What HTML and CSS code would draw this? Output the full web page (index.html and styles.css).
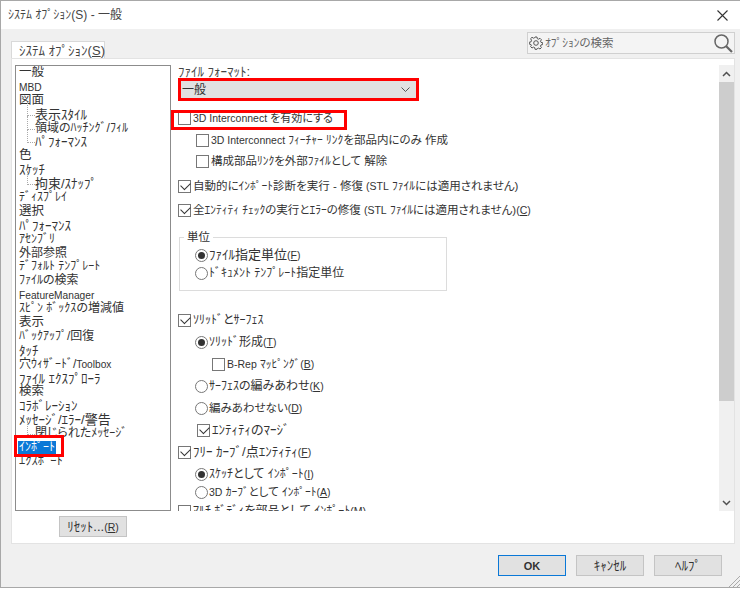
FILE: index.html
```html
<!DOCTYPE html>
<html lang="ja">
<head>
<meta charset="utf-8">
<title>ｼｽﾃﾑ ｵﾌﾟｼｮﾝ(S) - 一般</title>
<link rel="stylesheet" href="styles.css">
</head>
<body>
<div class="window">
  <header class="titlebar">
    <span class="title">ｼｽﾃﾑ ｵﾌﾟｼｮﾝ(S) - 一般</span>
    <svg class="close" width="11" height="11" viewBox="0 0 11 11"><path d="M.5.500l10 10M10.500.500l-10 10" stroke="#333" stroke-width="1.100" fill="none"/></svg>
  </header>
  <div class="tabstrip">
    <div class="tab">ｼｽﾃﾑ ｵﾌﾟｼｮﾝ(<u>S</u>)</div>
    <div class="search">
      <svg class="gear" width="14" height="14" viewBox="0 0 14 14"><path d="M6 1h2l.3 1.700 1.200.5L11 2.300l1.400 1.400-.9 1.500.5 1.200 1.700.3v1.900l-1.700.3-.5 1.200.9 1.500-1.400 1.400-1.500-.9-1.200.5L8 13.300H6l-.3-1.700-1.200-.5-1.500.9-1.400-1.400.9-1.500L2 8.500l-1.700-.4V6.200L2 5.900l.5-1.700-.9-1.500L3 1.300l1.500.9 1.200-.5z" fill="none" stroke="#555" stroke-width="1"/><circle cx="7" cy="7" r="2.300" fill="none" stroke="#555" stroke-width="1"/></svg>
      <span class="search-text">ｵﾌﾟｼｮﾝの検索</span>
      <svg class="lens" width="20" height="20" viewBox="0 0 20 20"><circle cx="8.500" cy="8.500" r="6.500" fill="none" stroke="#666" stroke-width="1.500"/><path d="M13 13l6 6" stroke="#666" stroke-width="2.200" fill="none"/></svg>
    </div>
  </div>
  <section class="panel">
    <div class="top">
      <div class="side">
        <ul class="tree">
          <li class="w">一般</li>
          <li><span class="l">MBD</span></li>
          <li class="w">図面</li>
          <li class="sub">表示ｽﾀｲﾙ</li>
          <li class="sub n">領域のﾊｯﾁﾝｸﾞ/ﾌｨﾙ</li>
          <li class="sub">ﾊﾟﾌｫｰﾏﾝｽ</li>
          <li class="w">色</li>
          <li>ｽｹｯﾁ</li>
          <li class="sub">拘束/ｽﾅｯﾌﾟ</li>
          <li class="n">ﾃﾞｨｽﾌﾟﾚｲ</li>
          <li class="w">選択</li>
          <li>ﾊﾟﾌｫｰﾏﾝｽ</li>
          <li class="n">ｱｾﾝﾌﾞﾘ</li>
          <li class="n">外部参照</li>
          <li class="n">ﾃﾞﾌｫﾙﾄ ﾃﾝﾌﾟﾚｰﾄ</li>
          <li class="n">ﾌｧｲﾙの検索</li>
          <li><span class="l">FeatureManager</span></li>
          <li class="n">ｽﾋﾟﾝ ﾎﾞｯｸｽの増減値</li>
          <li class="w">表示</li>
          <li class="n">ﾊﾞｯｸｱｯﾌﾟ/回復</li>
          <li>ﾀｯﾁ</li>
          <li class="n">穴ｳｨｻﾞｰﾄﾞ/<span class="l">Toolbox</span></li>
          <li>ﾌｧｲﾙ ｴｸｽﾌﾟﾛｰﾗ</li>
          <li class="w">検索</li>
          <li>ｺﾗﾎﾞﾚｰｼｮﾝ</li>
          <li>ﾒｯｾｰｼﾞ/ｴﾗｰ/警告</li>
          <li class="sub n">閉じられたﾒｯｾｰｼﾞ</li>
          <li class="selected n"><span>ｲﾝﾎﾟｰﾄ</span></li>
          <li class="w">ｴｸｽﾎﾟｰﾄ</li>
        </ul>
      </div>
      <div class="content">
        <div class="options">
          <div class="label-format">ﾌｧｲﾙ ﾌｫｰﾏｯﾄ:</div>
          <div class="select"><span>一般</span><svg width="9" height="5" viewBox="0 0 9 5"><path d="M.5.500l4 4 4-4" fill="none" stroke="#555"/></svg></div>
          <div class="row fs11 r-inter"><i class="cb"></i><span class="txt"><span class="l">3D Interconnect</span> を有効にする</span></div>
          <div class="row fs115 lv1 r-a"><i class="cb"></i><span class="txt"><span class="l">3D Interconnect</span> ﾌｨｰﾁｬｰ ﾘﾝｸを部品内にのみ 作成</span></div>
          <div class="row fs115 lv1 r-b"><i class="cb"></i><span class="txt">構成部品ﾘﾝｸを外部ﾌｧｲﾙとして 解除</span></div>
          <div class="row fs115 r-c"><i class="cb on"></i><span class="txt">自動的にｲﾝﾎﾟｰﾄ診断を実行 - 修復 <span class="l">(STL</span> ﾌｧｲﾙには適用されません)</span></div>
          <div class="row fs115 r-d"><i class="cb on"></i><span class="txt">全ｴﾝﾃｨﾃｨ ﾁｪｯｸの実行とｴﾗｰの修復 <span class="l">(STL</span> ﾌｧｲﾙには適用されません)<span class="l">(<u>C</u>)</span></span></div>
          <fieldset class="units">
            <legend>単位</legend>
            <div class="row r-file"><i class="rb on"></i><span class="txt">ﾌｧｲﾙ指定単位<span class="l">(<u>F</u>)</span></span></div>
            <div class="row fs12 r-doc"><i class="rb"></i><span class="txt">ﾄﾞｷｭﾒﾝﾄ ﾃﾝﾌﾟﾚｰﾄ指定単位</span></div>
          </fieldset>
          <div class="row fs12 r-solid"><i class="cb on"></i><span class="txt">ｿﾘｯﾄﾞとｻｰﾌｪｽ</span></div>
          <div class="row fs12 lv2 r-n"><i class="rb on"></i><span class="txt">ｿﾘｯﾄﾞ形成<span class="l">(<u>T</u>)</span></span></div>
          <div class="row fs115 lv3 r-n"><i class="cb"></i><span class="txt"><span class="l">B-Rep</span> ﾏｯﾋﾟﾝｸﾞ<span class="l">(<u>B</u>)</span></span></div>
          <div class="row fs12 lv2 r-n"><i class="rb"></i><span class="txt">ｻｰﾌｪｽの編みあわせ<span class="l">(<u>K</u>)</span></span></div>
          <div class="row fs115 lv2 r-n"><i class="rb"></i><span class="txt">編みあわせない<span class="l">(<u>D</u>)</span></span></div>
          <div class="row lv4 r-n"><i class="cb on"></i><span class="txt">ｴﾝﾃｨﾃｨのﾏｰｼﾞ</span></div>
          <div class="row r-n"><i class="cb on"></i><span class="txt">ﾌﾘｰ ｶｰﾌﾞ/点ｴﾝﾃｨﾃｨ<span class="l">(<u>F</u>)</span></span></div>
          <div class="row fs12 lv2 r-n"><i class="rb on"></i><span class="txt">ｽｹｯﾁとして ｲﾝﾎﾟｰﾄ<span class="l">(<u>I</u>)</span></span></div>
          <div class="row fs115 lv2 r-last"><i class="rb"></i><span class="txt"><span class="l">3D</span> ｶｰﾌﾞとして ｲﾝﾎﾟｰﾄ<span class="l">(<u>A</u>)</span></span></div>
          <div class="row fs12 r-last2"><i class="cb"></i><span class="txt">ﾏﾙﾁ ﾎﾞﾃﾞｨを部品として ｲﾝﾎﾟｰﾄ<span class="l">(<u>M</u>)</span></span></div>
        </div>
        <div class="scrollbar">
          <svg width="9" height="6" viewBox="0 0 9 6"><path d="M1 5l3.500-3.500L8 5" fill="none" stroke="#505050" stroke-width="1.500"/></svg>
          <div class="track"><div class="thumb"></div></div>
          <svg width="9" height="6" viewBox="0 0 9 6"><path d="M1 1l3.500 3.500L8 1" fill="none" stroke="#505050" stroke-width="1.500"/></svg>
        </div>
      </div>
    </div>
    <div class="reset-row"><button class="btn">ﾘｾｯﾄ...<span class="l">(<u>R</u>)</span></button></div>
  </section>
  <footer class="footer">
    <button class="btn ok">OK</button>
    <button class="btn">ｷｬﾝｾﾙ</button>
    <button class="btn">ﾍﾙﾌﾟ</button>
  </footer>
  <svg class="grip" width="12" height="12" viewBox="0 0 12 12"><path d="M12 1L1 12M12 5l-7 7M12 9l-3 3" stroke="#aaa" fill="none"/></svg>
  <div class="hl hl-select"></div>
  <div class="hl hl-inter"></div>
  <div class="hl hl-import"></div>
</div>
</body>
</html>
```

FILE: styles.css
```css
* { box-sizing: border-box; }
html, body { margin: 0; padding: 0; }
body { width: 740px; height: 589px; overflow: hidden; background: #fff; }
.window {
  position: relative;
  width: 740px;
  height: 588px;
  border: 1px solid #a8a8a8;
  border-right: 0;
  background: #f0f0f0;
  font-family: "Liberation Sans", "Noto Sans CJK JP", sans-serif;
  font-feature-settings: "palt";
  font-size: 13px;
  line-height: 14px;
  color: #333;
  display: flex;
  flex-direction: column;
}
.l { font-size: 10.500px; }
.titlebar {
  height: 28px;
  background: #fff;
  display: flex;
  align-items: center;
  justify-content: space-between;
  padding: 0 12px 0 7px;
  flex: none;
}
.title { color: #444; font-size: 12px; }
.tabstrip {
  height: 29px;
  flex: none;
  display: flex;
  justify-content: space-between;
  align-items: flex-start;
  padding: 3px 5px 0 10px;
}
.tab {
  margin-top: 9px;
  width: 94px;
  height: 18px;
  background: #fff;
  border: 1px solid #d9d9d9;
  border-bottom: 0;
  padding: 2px 0 0 7px;
  color: #444;
  white-space: nowrap;
}
.search {
  width: 208px;
  height: 22px;
  border: 1px solid #d0d0d0;
  background: #f4f4f4;
  display: flex;
  align-items: center;
  padding: 0 1px;
  color: #666;
  font-size: 11.500px;
}
.gear { flex: none; margin-right: 2px; }
.search-text { flex: 1; }
.panel {
  margin: 0 5px 0 10px;
  height: 486px;
  background: #fff;
  border: 1px solid #e3e3e3;
  flex: none;
  padding: 6px 0 0 3px;
  display: flex;
  flex-direction: column;
}
.top { display: flex; height: 446px; flex: none; }
.side { width: 156px; flex: none; }
.tree {
  list-style: none;
  margin: 0;
  padding: 0 0 0 3px;
  height: 446px;
  border: 1px solid #8c8c8c;
  overflow: hidden;
}
.tree li {
  height: 13.900px;
  line-height: 13.900px;
  white-space: nowrap;
}
.tree li.n { font-size: 12px; }
.tree li.w { font-size: 12.500px; }
.tree .l { font-size: 10.200px; }
.tree li.sub {
  position: relative;
  margin-left: 16px;
}
.tree li.sub::before {
  content: "";
  position: absolute;
  left: -8px;
  top: -6px;
  width: 7px;
  height: 13px;
  border-left: 1px dotted #aaa;
  border-bottom: 1px dotted #aaa;
}
.tree li.selected span {
  display: inline-block;
  margin-left: -1px;
  padding: 0 1px;
  background: #0a78d7;
  color: #fff;
}
.content { flex: 1; display: flex; min-width: 0; padding-left: 7px; }
.options { flex: 1; height: 446px; overflow: hidden; min-width: 0; }
.label-format { height: 14px; color: #444; }
.select {
  margin: 2px 0 0 3px;
  width: 235px;
  height: 17px;
  background: #e1e1e1;
  display: flex;
  align-items: center;
  justify-content: space-between;
  padding: 0 6px 0 1px;
  font-size: 12px;
}
.row {
  display: flex;
  align-items: center;
  height: 14px;
  white-space: nowrap;
}
.fs11 { font-size: 11px; }
.fs115 { font-size: 11.500px; }
.fs12 { font-size: 12px; }
.txt { margin-left: 2px; }
.cb, .rb {
  display: block;
  flex: none;
  width: 13px;
  height: 13px;
  background: #fff;
  border: 1px solid #777;
  position: relative;
}
.rb { border-radius: 50%; }
.cb.on::after {
  content: "";
  position: absolute;
  left: 2px;
  top: 1px;
  width: 8px;
  height: 5px;
  border-left: 1.400px solid #333;
  border-bottom: 1.400px solid #333;
  transform: rotate(-45deg);
}
.rb.on::after {
  content: "";
  position: absolute;
  left: 2px;
  top: 2px;
  width: 7px;
  height: 7px;
  border-radius: 50%;
  background: #333;
}
.r-inter { margin-top: 13px; }
.lv1 { padding-left: 18px; }
.r-a { margin-top: 8px; }
.r-b { margin-top: 7px; }
.r-c { margin-top: 11px; }
.r-d { margin-top: 10px; }
.units {
  margin: 14px 0 0 1px;
  padding: 0 0 0 15px;
  width: 268px;
  height: 60px;
  border: 1px solid #dcdcdc;
  min-inline-size: 0;
}
.units legend { padding: 0 3px; margin-left: -11px; line-height: 12px; font-size: 11.500px; }
.units .txt { margin-left: 1px; }
.r-file { margin-top: 5px; }
.r-doc { margin-top: 4px; }
.r-solid { margin-top: 22px; }
.lv2 { padding-left: 17px; }
.lv2 .txt { margin-left: 1px; }
.lv3 { padding-left: 34px; }
.lv4 { padding-left: 19px; }
.r-n { margin-top: 8px; }
.r-last { margin-top: 4px; }
.r-last2 { margin-top: 5px; }
.scrollbar {
  width: 15px;
  height: 446px;
  background: #f0f0f0;
  flex: none;
  display: flex;
  flex-direction: column;
  align-items: center;
  justify-content: space-between;
  padding: 6px 0 5px;
}
.track { flex: 1; width: 15px; margin-top: 5px; }
.thumb { width: 15px; height: 319px; background: #cdcdcd; }
.reset-row { padding: 5px 0 0 44px; }
.btn {
  display: block;
  font: inherit;
  color: #333;
  width: 68px;
  height: 21px;
  padding: 0;
  background: #e1e1e1;
  border: 1px solid #c4c4c4;
  white-space: nowrap;
}
.footer {
  display: flex;
  justify-content: flex-end;
  gap: 10px;
  padding: 11px 18px 0 0;
}
.btn.ok { border-color: #0a78d7; font-size: 11px; font-weight: bold; }
.grip { position: absolute; right: 0; bottom: 0; }
.hl { position: absolute; border: 3px solid #f00; pointer-events: none; }
.hl-select { left: 177px; top: 77px; width: 241px; height: 23px; }
.hl-inter { left: 170px; top: 109px; width: 176px; height: 20px; }
.hl-import { left: 13px; top: 434px; width: 50px; height: 22px; }
```
